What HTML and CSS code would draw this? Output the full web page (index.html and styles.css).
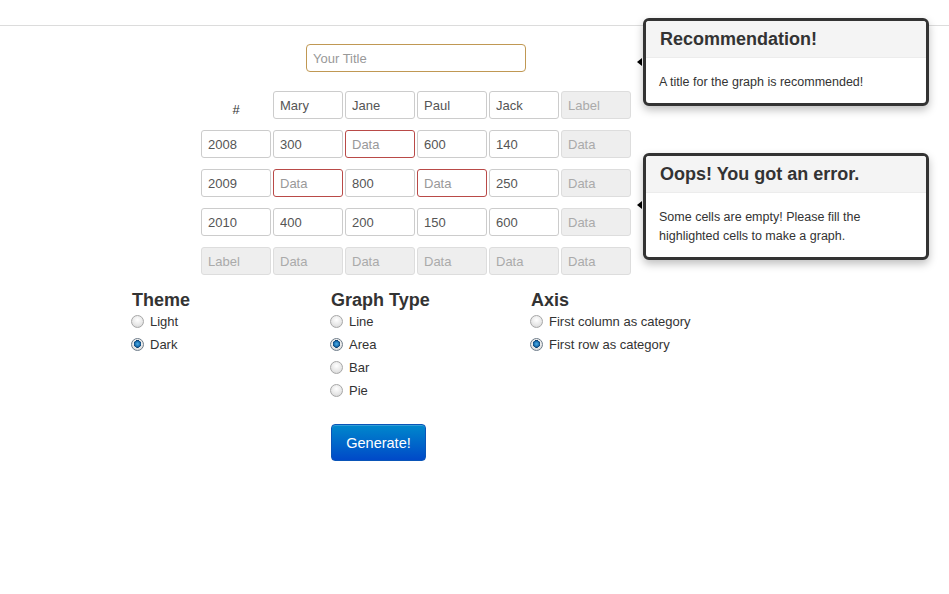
FILE: index.html
```html
<!DOCTYPE html>
<html>
<head>
<meta charset="utf-8">
<link rel="stylesheet" href="styles.css">
</head>
<body>
<div class="topbar"></div>
<div class="page">
  <div class="table-wrap">
    <input class="title-input" type="text" placeholder="Your Title">
    <div class="grid">
      <div class="hash">#</div>
      <input class="cell" value="Mary">
      <input class="cell" value="Jane">
      <input class="cell" value="Paul">
      <input class="cell" value="Jack">
      <input class="cell off" placeholder="Label" disabled>

      <input class="cell" value="2008">
      <input class="cell" value="300">
      <input class="cell err" placeholder="Data">
      <input class="cell" value="600">
      <input class="cell" value="140">
      <input class="cell off" placeholder="Data" disabled>

      <input class="cell" value="2009">
      <input class="cell err" placeholder="Data">
      <input class="cell" value="800">
      <input class="cell err" placeholder="Data">
      <input class="cell" value="250">
      <input class="cell off" placeholder="Data" disabled>

      <input class="cell" value="2010">
      <input class="cell" value="400">
      <input class="cell" value="200">
      <input class="cell" value="150">
      <input class="cell" value="600">
      <input class="cell off" placeholder="Data" disabled>

      <input class="cell off" placeholder="Label" disabled>
      <input class="cell off" placeholder="Data" disabled>
      <input class="cell off" placeholder="Data" disabled>
      <input class="cell off" placeholder="Data" disabled>
      <input class="cell off" placeholder="Data" disabled>
      <input class="cell off" placeholder="Data" disabled>
    </div>
  </div>

  <div class="options">
    <div class="col">
      <h4 class="col-title">Theme</h4>
      <label class="opt"><input type="radio" name="theme"> Light</label>
      <label class="opt"><input type="radio" name="theme" checked> Dark</label>
    </div>
    <div class="col">
      <h4 class="col-title">Graph Type</h4>
      <label class="opt"><input type="radio" name="type"> Line</label>
      <label class="opt"><input type="radio" name="type" checked> Area</label>
      <label class="opt"><input type="radio" name="type"> Bar</label>
      <label class="opt"><input type="radio" name="type"> Pie</label>
      <button class="btn">Generate!</button>
    </div>
    <div class="col">
      <h4 class="col-title">Axis</h4>
      <label class="opt"><input type="radio" name="axis"> First column as category</label>
      <label class="opt"><input type="radio" name="axis" checked> First row as category</label>
    </div>
  </div>
</div>

<div class="popover pop-rec">
  <span class="arrow"></span>
  <h3 class="pop-title">Recommendation!</h3>
  <div class="pop-body">A title for the graph is recommended!</div>
</div>
<div class="popover pop-err">
  <span class="arrow"></span>
  <h3 class="pop-title">Oops! You got an error.</h3>
  <div class="pop-body">Some cells are empty! Please fill the highlighted cells to make a graph.</div>
</div>
</body>
</html>
```
FILE: styles.css
```css
* { box-sizing: border-box; }
body {
  margin: 0;
  font-family: "Liberation Sans", Arial, sans-serif;
  font-size: 13px;
  color: #333;
  background: #fff;
}
.topbar {
  height: 26px;
  border-bottom: 1px solid #dcdcdc;
}
.page {
  position: relative;
}
.table-wrap {
  width: 430px;
  margin-left: 201px;
  display: flex;
  flex-direction: column;
  align-items: center;
}
input { font-family: inherit; }
.title-input {
  width: 220px;
  height: 28px;
  margin-top: 18px;
  border: 1px solid #c09853;
  border-radius: 4px;
  padding: 0 6px;
  font-size: 13px;
  color: #555;
  outline: none;
}
.title-input::placeholder { color: #999; }
.grid {
  margin-top: 19px;
  display: grid;
  grid-template-columns: repeat(6, 70px);
  column-gap: 2px;
  row-gap: 11px;
}
.hash {
  height: 28px;
  display: flex;
  align-items: center;
  justify-content: center;
  padding-top: 8px;
  font-size: 13px;
  color: #333;
}
.cell {
  width: 70px;
  height: 28px;
  border: 1px solid #ccc;
  border-radius: 3px;
  padding: 0 6px;
  font-size: 13px;
  color: #555;
  background: #fff;
  outline: none;
}
.cell::placeholder { color: #999; }
.cell.err { border-color: #b94a48; }
.cell.off {
  background: #eee;
  border-color: #ddd;
}
.cell.off::placeholder { color: #aaa; }

.options {
  display: grid;
  grid-template-columns: 199px 200px 200px;
  margin-left: 132px;
  margin-top: 15px;
}
.col {
  display: flex;
  flex-direction: column;
  align-items: flex-start;
}
.col-title {
  margin: 0;
  font-size: 18px;
  line-height: 20px;
  font-weight: bold;
  color: #333;
}
.opt {
  display: flex;
  align-items: center;
  height: 23px;
  font-size: 13px;
  color: #333;
}
.opt input {
  appearance: none;
  -webkit-appearance: none;
  width: 13px;
  height: 13px;
  margin: 0 6px 0 -1px;
  border-radius: 50%;
  border: 1px solid #a7a7a7;
  background: radial-gradient(circle at 50% 35%, #fff 0%, #e6e6e6 60%, #cfcfcf 100%);
  position: relative;
}
.opt input:checked {
  border-color: #6f7d8a;
  background:
    radial-gradient(circle at 50% 45%, #4fb0e8 0, #1a6fb0 2.5px, #0d3f6e 3.6px, transparent 4px),
    radial-gradient(circle at 50% 35%, #fff 0%, #e6e6e6 60%, #cfcfcf 100%);
}
.btn {
  margin-top: 22px;
  width: 95px;
  height: 37px;
  border: 1px solid #0a55b8;
  border-radius: 4px;
  background: linear-gradient(#0088cc, #0049c8);
  color: #fff;
  font-family: inherit;
  font-size: 14.5px;
  box-shadow: inset 0 1px 0 rgba(255,255,255,.2);
}

.popover {
  position: absolute;
  left: 643px;
  width: 286px;
  background: #fff;
  border: 3px solid #333;
  border-radius: 6px;
  box-shadow: 0 4px 8px rgba(0,0,0,.25);
}
.pop-rec { top: 18px; }
.pop-err { top: 153px; }
.pop-title {
  margin: 0;
  height: 37px;
  padding: 0 14px;
  display: flex;
  align-items: center;
  background: #f4f4f4;
  border-bottom: 1px solid #ececec;
  border-radius: 3px 3px 0 0;
  font-size: 18px;
  font-weight: bold;
  color: #333;
}
.pop-body {
  padding: 15px 13px 11px;
  font-size: 12.5px;
  line-height: 19px;
  color: #333;
}
.arrow {
  position: absolute;
  left: -9px;
  top: 37px;
  width: 0;
  height: 0;
  border-top: 4px solid transparent;
  border-bottom: 4px solid transparent;
  border-right: 5px solid #000;
}
.pop-err .arrow { top: 45px; }
```
